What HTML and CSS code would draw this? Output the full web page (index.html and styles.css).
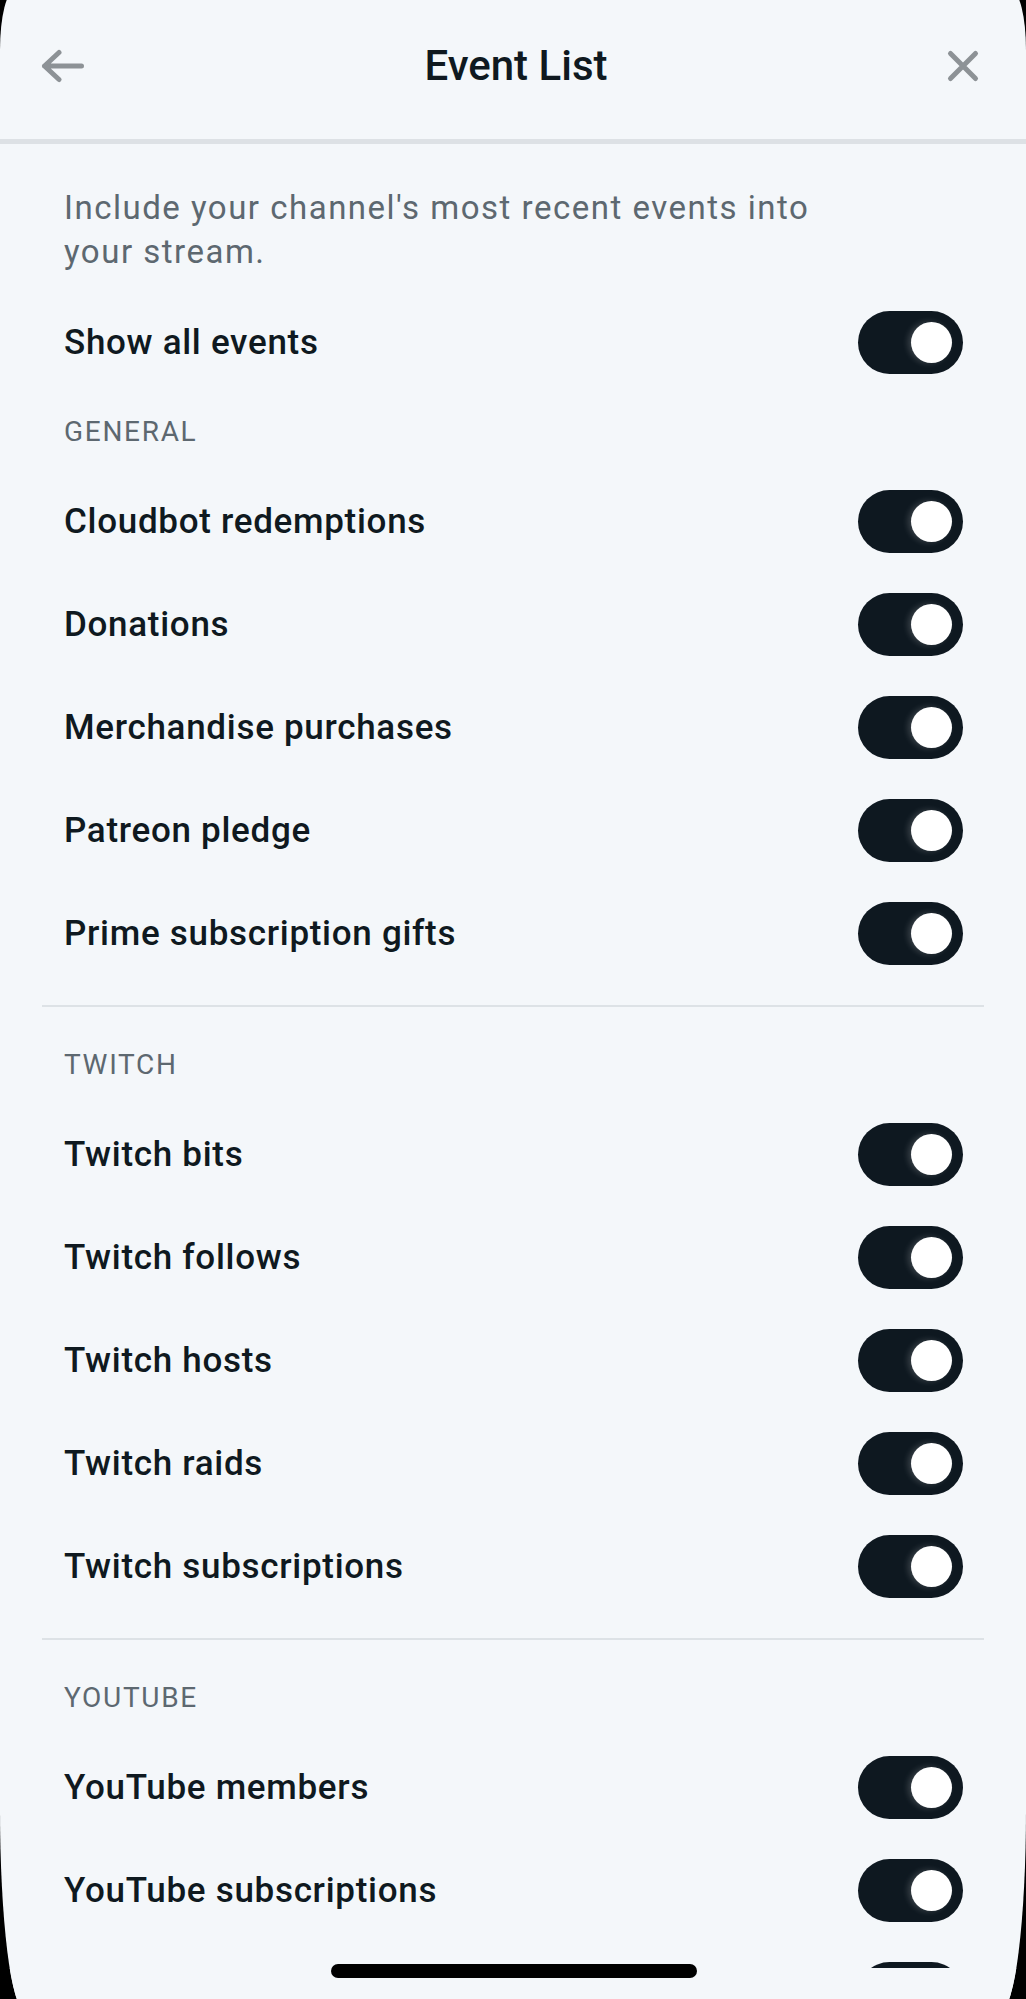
FILE: index.html
```html
<!DOCTYPE html>
<html lang="en">
<head>
<meta charset="utf-8">
<title>Event List</title>
<link rel="stylesheet" href="styles.css">
</head>
<body>
<div class="screen">
  <header class="topbar">
    <button class="icon-btn back" aria-label="Back">
      <svg width="46" height="34" viewBox="0 0 46 34"><path d="M4.5 17H41.5M19 3.5L4.5 17L19 30.5" fill="none" stroke="#8d9296" stroke-width="5" stroke-linecap="round" stroke-linejoin="round"/></svg>
    </button>
    <h1 class="title">Event List</h1>
    <button class="icon-btn close" aria-label="Close">
      <svg width="34" height="34" viewBox="0 0 34 34"><path d="M4.5 4.5L29.5 29.5M29.5 4.5L4.5 29.5" fill="none" stroke="#8d9296" stroke-width="5" stroke-linecap="round"/></svg>
    </button>
  </header>
  <main class="content">
    <p class="intro">Include your channel's most recent events into your stream.</p>
    <div class="row"><span class="label">Show all events</span><span class="toggle"><span class="knob"></span></span></div>

    <div class="section-title">General</div>
    <div class="row"><span class="label">Cloudbot redemptions</span><span class="toggle"><span class="knob"></span></span></div>
    <div class="row"><span class="label">Donations</span><span class="toggle"><span class="knob"></span></span></div>
    <div class="row"><span class="label">Merchandise purchases</span><span class="toggle"><span class="knob"></span></span></div>
    <div class="row"><span class="label">Patreon pledge</span><span class="toggle"><span class="knob"></span></span></div>
    <div class="row"><span class="label">Prime subscription gifts</span><span class="toggle"><span class="knob"></span></span></div>
    <hr class="divider">

    <div class="section-title">Twitch</div>
    <div class="row"><span class="label">Twitch bits</span><span class="toggle"><span class="knob"></span></span></div>
    <div class="row"><span class="label">Twitch follows</span><span class="toggle"><span class="knob"></span></span></div>
    <div class="row"><span class="label">Twitch hosts</span><span class="toggle"><span class="knob"></span></span></div>
    <div class="row"><span class="label">Twitch raids</span><span class="toggle"><span class="knob"></span></span></div>
    <div class="row"><span class="label">Twitch subscriptions</span><span class="toggle"><span class="knob"></span></span></div>
    <hr class="divider">

    <div class="section-title">YouTube</div>
    <div class="row"><span class="label">YouTube members</span><span class="toggle"><span class="knob"></span></span></div>
    <div class="row"><span class="label">YouTube subscriptions</span><span class="toggle"><span class="knob"></span></span></div>
    <div class="row"><span class="label"></span><span class="toggle"><span class="knob"></span></span></div>
  </main>
  <footer class="home-area"></footer>
  <div class="home-indicator"></div>
</div>
</body>
</html>
```

FILE: styles.css
```css
html, body {
  margin: 0;
  padding: 0;
  height: 1999px;
  overflow: hidden;
  background: #000;
}

.screen {
  position: relative;
  margin-top: -10px;
  height: 2020px;
  background: #f4f7fa;
  border-radius: 15px 15px 25px 25px / 60px 60px 200px 200px;
  display: flex;
  flex-direction: column;
  overflow: hidden;
  font-family: Roboto, "Noto Sans", sans-serif;
  color: #0f1920;
}

.topbar {
  flex: none;
  height: 132px;
  padding-top: 10px;
  padding-bottom: 7px;
  border-bottom: 5px solid #dde1e5;
  display: flex;
  align-items: center;
  justify-content: space-between;
  padding-left: 40px;
  padding-right: 46px;
}

.icon-btn {
  border: 0;
  background: none;
  padding: 0;
  display: flex;
  align-items: center;
  justify-content: center;
}

.title {
  margin: 0;
  font-size: 42px;
  font-weight: 500;
  line-height: 50px;
  color: #0f1920;
}

.content {
  flex: 1;
  min-height: 0;
  overflow: hidden;
  padding-top: 42px;
}

.intro {
  margin: 0 0 17px;
  padding: 0 150px 0 64px;
  font-size: 33px;
  line-height: 44px;
  letter-spacing: 1.5px;
  color: #5d6870;
}

.row {
  height: 103px;
  padding: 0 63px 0 64px;
  display: flex;
  align-items: center;
  justify-content: space-between;
}

.label {
  font-size: 35px;
  font-weight: 500;
  letter-spacing: 0.7px;
  color: #0f1920;
}

.toggle {
  position: relative;
  width: 105px;
  height: 63px;
  border-radius: 32px;
  background: #0e1820;
  display: flex;
  align-items: center;
  justify-content: flex-end;
  padding-right: 11px;
  box-sizing: border-box;
}

.knob {
  width: 41px;
  height: 41px;
  border-radius: 50%;
  background: #fff;
  box-shadow: -3px 0 6px rgba(255, 255, 255, 0.18);
}

.section-title {
  padding: 18px 64px;
  font-size: 28px;
  line-height: 40px;
  text-transform: uppercase;
  color: #5d6870;
  letter-spacing: 1.7px;
}

.divider {
  margin: 20px 42px;
  border: 0;
  height: 2px;
  background: #dde2e6;
}

.home-area {
  flex: none;
  height: 42px;
  background: #f4f7fa;
}

.home-indicator {
  position: absolute;
  left: 331px;
  top: 1974px;
  width: 366px;
  height: 14px;
  border-radius: 7px;
  background: #000;
}
```
